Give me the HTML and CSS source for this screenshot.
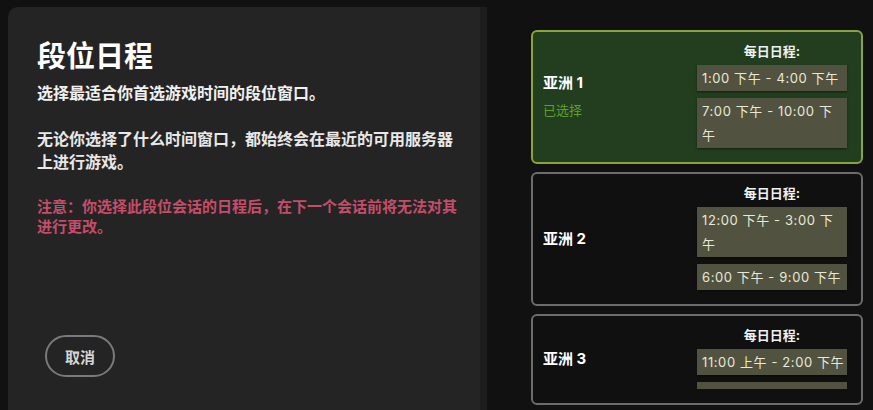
FILE: index.html
```html
<!DOCTYPE html>
<html lang="zh-CN">
<head>
    <meta charset="UTF-8">
    <meta name="viewport" content="width=device-width, initial-scale=1.0">
    <title>段位日程</title>
    <link rel="stylesheet" href="styles.css">
</head>
<body>

    <!-- Info Panel -->
    <div class="panel">
        <h1>段位日程</h1>
        <p class="lead">选择最适合你首选游戏时间的段位窗口。</p>
        <p class="text">无论你选择了什么时间窗口，都始终会在最近的可用服务器上进行游戏。</p>
        <p class="note">注意：你选择此段位会话的日程后，在下一个会话前将无法对其进行更改。</p>
        <button class="cancel">取消</button>
    </div>

    <!-- Region List -->
    <div class="regions">
        <div class="region selected">
            <div class="region-info">
                <div class="region-name">亚洲 1</div>
                <div class="region-status">已选择</div>
            </div>
            <div class="schedule">
                <div class="schedule-title">每日日程:</div>
                <div class="slot">1:00 下午 - 4:00 下午</div>
                <div class="slot">7:00 下午 - 10:00 下午</div>
            </div>
        </div>

        <div class="region">
            <div class="region-info">
                <div class="region-name">亚洲 2</div>
            </div>
            <div class="schedule">
                <div class="schedule-title">每日日程:</div>
                <div class="slot">12:00 下午 - 3:00 下午</div>
                <div class="slot">6:00 下午 - 9:00 下午</div>
            </div>
        </div>

        <div class="region clipped">
            <div class="region-info">
                <div class="region-name">亚洲 3</div>
            </div>
            <div class="schedule">
                <div class="schedule-title">每日日程:</div>
                <div class="slot">11:00 上午 - 2:00 下午</div>
                <div class="slot">5:00 下午 - 8:00 下午</div>
            </div>
        </div>
    </div>

</body>
</html>
```

FILE: styles.css
```css
body {
    font-family: "Inter", "Noto Sans CJK SC", sans-serif;
    font-variant-numeric: proportional-nums;
    margin: 0;
    background-color: #111111;
    display: flex;
    height: 410px;
    overflow: hidden;
    color: #f0f0f0;
}
.panel {
    margin: 7px 0 0 8px;
    width: 426px;
    padding: 32px 17px 33px 29px;
    background-color: #242424;
    border-right: 7px solid #1d1d1d;
    border-radius: 10px 0 0 0;
    display: flex;
    flex-direction: column;
}
h1 {
    margin: 0;
    font-size: 29px;
    line-height: 36px;
    color: #ffffff;
}
.lead {
    margin: 7px 0 0;
    font-size: 16px;
    line-height: 22px;
    font-weight: bold;
}
.text {
    margin: 24px 0 0;
    font-size: 16px;
    line-height: 23px;
    font-weight: bold;
    color: #e8e8e8;
}
.note {
    margin: 23px 0 0;
    font-size: 15px;
    line-height: 20px;
    font-weight: bold;
    color: #c44d6a;
}
.cancel {
    margin-top: auto;
    width: 70px;
    height: 42px;
    margin-left: 8px;
    background: transparent;
    border: 2px solid #7a7a7a;
    border-radius: 21px;
    color: #d4d4d4;
    font-family: inherit;
    font-size: 15px;
    font-weight: bold;
    cursor: pointer;
}
.regions {
    margin-left: 44px;
    padding-top: 30px;
    width: 332px;
    display: flex;
    flex-direction: column;
    gap: 8px;
}
.region {
    display: flex;
    align-items: center;
    justify-content: space-between;
    padding: 10px 14px 14px 10px;
    border: 2px solid #6c6c6c;
    border-radius: 6px;
    background-color: #101010;
}
.region.selected {
    border-color: #88a43a;
    background-color: #223e1f;
}
.region.clipped .schedule {
    height: 63px;
    overflow: hidden;
}
.region-name {
    font-size: 15px;
    font-weight: bold;
    color: #ffffff;
}
.region-status {
    margin-top: 8px;
    font-size: 13px;
    color: #5f9f2a;
}
.schedule {
    width: 150px;
    display: flex;
    flex-direction: column;
    gap: 7px;
}
.schedule-title {
    text-align: center;
    font-size: 13px;
    font-weight: bold;
    line-height: 18px;
    margin-bottom: -2px;
}
.slot {
    flex-shrink: 0;
    background-color: #515340;
    color: #e8e8d6;
    font-size: 13px;
    letter-spacing: 0.6px;
    line-height: 24px;
    padding: 1px 2px 1px 5px;
    box-shadow: 0 1px 2px rgba(0, 0, 0, 0.5);
}
```
